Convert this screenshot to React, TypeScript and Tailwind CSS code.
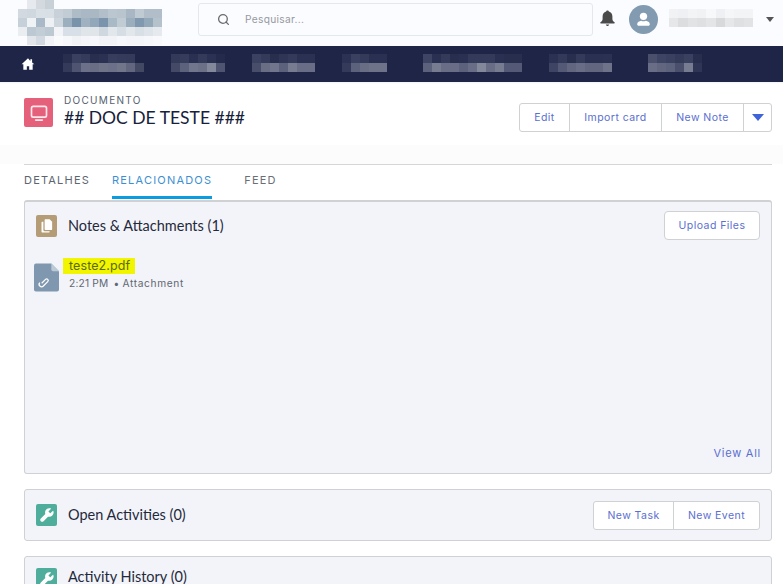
import React from 'react';
import { Search } from 'lucide-react';

const logoRows: string[][] = [
  ['#fbfcff', '#e6e9ed', '#d3d9de', '#c9d1d8', '#fbfcff', '#fbfcff', '#fbfcff', '#fbfcff', '#fbfcff', '#fbfcff', '#fbfcff', '#fbfcff', '#fbfcff', '#fbfcff', '#fbfcff', '#fbfcff'],
  ['#d2d9e0', '#d0d8df', '#d9e0e6', '#d8dfe5', '#c8d1d9', '#c2ccd4', '#aebcc8', '#a9b8c4', '#aab8c4', '#b2bfca', '#bac6d0', '#b8c4ce', '#a9b7c4', '#c0cad3', '#b1bdc8', '#b1bdc8'],
  ['#c6d0d8', '#f0f3f6', '#a9b9c7', '#eef1f4', '#cdd6dd', '#9cafbf', '#7893aa', '#a0b2c1', '#92a7b9', '#7a94ab', '#a9b9c6', '#c0cbd4', '#9aaebe', '#8099ae', '#93a8b9', '#b5c2cc'],
  ['#eaeef1', '#bcc8d2', '#c3cdd6', '#bcc8d2', '#f2f4f7', '#d8dfe6', '#d8dfe6', '#e0e5ea', '#e0e5ea', '#cfd8df', '#e2e7ec', '#d6dde4', '#e2e7ec', '#d8dfe5', '#dfe4ea', '#e6eaef'],
  ['#fbfcff', '#e2e6eb', '#d2d9e0', '#f1f3f6', '#f9fafc', '#f6f7fa', '#f0f2f5', '#f3f5f8', '#f6f7fa', '#f1f3f6', '#f1f3f6', '#f6f7fa', '#f3f5f8', '#f3f5f8', '#f6f7fa', '#f8f9fb'],
];

const navBlocks: { gap: number; top: string[]; bottom: string[] }[] = [
  { gap: 0, top: ['#272e4e', '#3a4060', '#353b5b', '#272e4e', '#2b3152', '#373d5c', '#353b5b', '#343a5a', '#1e2547'], bottom: ['#343a5a', '#4f5470', '#6c7088', '#6a6e85', '#707489', '#6c7088', '#72768b', '#62667e', '#434863'] },
  { gap: 27, top: ['#333a59', '#363c5c', '#2a3051', '#343a5a', '#2b3152', '#232a4b'], bottom: ['#444a66', '#5d627c', '#72768c', '#6d7188', '#84889b', '#4f5470'] },
  { gap: 27, top: ['#3b4160', '#343a5a', '#272e4e', '#2f3555', '#343a5a', '#2b3152', '#2b3152'], bottom: ['#484d69', '#6a6e85', '#72768c', '#5d627c', '#787c91', '#696d85', '#696d85'] },
  { gap: 27, top: ['#2b3152', '#3a4060', '#343a5a', '#2a3051', '#2a3051'], bottom: ['#343a5a', '#5d627c', '#6a6e85', '#6f738a', '#6f738a'] },
  { gap: 36, top: ['#3e4463', '#2a3051', '#343a5a', '#272e4e', '#2a3051', '#343a5a', '#343a5a', '#343a5a', '#2a3051', '#272e4e', '#272e4e'], bottom: ['#5d627c', '#787c91', '#696d85', '#696d85', '#5d627c', '#696d85', '#84889b', '#696d85', '#787c91', '#545975', '#545975'] },
  { gap: 27, top: ['#2b3152', '#333a59', '#272e4e', '#343a5a', '#2a3051', '#2a3051', '#2b3152'], bottom: ['#3e4463', '#545975', '#62667e', '#696d85', '#62667e', '#62667e', '#6f738a'] },
  { gap: 36, top: ['#4a4f6b', '#3e4463', '#3a4060', '#343a5a', '#3a4060', '#272e4e'], bottom: ['#696d85', '#62667e', '#5d627c', '#4a4f6b', '#787c91', '#2f3555'] },
];

const userRows: string[][] = [
  ['#f1f2f4', '#eef0f3', '#f3f4f6', '#f1f2f4', '#f7f8fa', '#eff0f3', '#f5f6f8', '#f3f4f6', '#f3f4f6'],
  ['#e6e7e9', '#dcdddf', '#e2e3e5', '#dfe0e2', '#e4e5e7', '#d8d9db', '#e6e7e9', '#dfe0e2', '#e2e3e5'],
];

const Mosaic = ({ rows, cell, width }: { rows: string[][]; cell: number; width?: number }) => (
  <div className="flex flex-col" style={width ? { width } : undefined}>
    {rows.map((row, i) => (
      <div key={i} className="flex">
        {row.map((color, j) => (
          <div key={j} className="grow" style={{ width: cell, height: cell, backgroundColor: color }} />
        ))}
      </div>
    ))}
  </div>
);

const ActionButton = ({ label, className = '' }: { label: string; className?: string }) => (
  <button className={`pt-[1px] text-[10.5px] tracking-[0.45px] text-[#5a6fd0] font-['Inter',sans-serif] ${className}`}>
    {label}
  </button>
);

const WrenchTile = () => (
  <div className="w-[21px] h-[22px] rounded-[2px] bg-[#4fae9b] flex items-center justify-center shrink-0">
    <svg viewBox="0 0 24 24" className="w-[16px] h-[16px]" fill="#fff">
      <path d="M21.6 6.2a.6.6 0 0 0-1-.3l-3.2 3.2a.7.7 0 0 1-1 0l-1.9-1.9a.7.7 0 0 1 0-1L17.7 3a.6.6 0 0 0-.3-1 6.6 6.6 0 0 0-7.9 8.5L2.7 17.2a2.9 2.9 0 0 0 4.1 4.1l6.7-6.8a6.6 6.6 0 0 0 8.1-8.3z" />
    </svg>
  </div>
);

export default function App() {
  return (
    <div className="h-screen w-full overflow-hidden bg-white font-['Lato',sans-serif]">
      {/* Top bar */}
      <header className="h-[46px] bg-[#fbfcff] flex items-start pl-[18px]">
        <div className="w-[144px] shrink-0">
          <Mosaic rows={logoRows} cell={9} />
        </div>
        <div className="ml-[36px] mt-[3px] w-[395px] h-[33px] border border-[#e5e7ea] rounded-[3px] flex items-center pl-[18px]">
          <Search size={13} strokeWidth={2.4} className="text-[#6b6b6b]" />
          <span className="ml-[15px] text-[10.2px] tracking-[0.3px] text-[#96999e] font-['Inter',sans-serif]">Pesquisar...</span>
        </div>
        <svg viewBox="0 0 17 17" className="ml-[6px] mt-[10px] w-[17px] h-[17px]" fill="#4a4a4a">
          <path d="M8.5 0.5c.8 0 1.3.5 1.4 1.1 2.2.6 3.5 2.5 3.5 4.9v2.6c0 1.2.6 2.1 2.1 3.2.6.5.3 1.2-.4 1.2H1.9c-.7 0-1-.7-.4-1.2C3 11.2 3.6 10.3 3.6 9.1V6.5c0-2.4 1.3-4.3 3.5-4.9.1-.6.6-1.1 1.4-1.1z" />
          <path d="M6.8 14.6h3.4c-.2.9-.9 1.5-1.7 1.5s-1.5-.6-1.7-1.5z" />
        </svg>
        <div className="ml-[13px] mt-[5px] w-[29px] h-[29px] rounded-full bg-[#829bb1] flex items-center justify-center shrink-0">
          <svg viewBox="0 0 24 24" className="w-[19px] h-[19px]" fill="#fff">
            <circle cx="12" cy="8" r="4.6" />
            <path d="M4 18c0-2.6 3-4 5-4.4 1.8 1 4.2 1 6 0 2 .4 5 1.8 5 4.4 0 1.1-.8 2-2 2H6c-1.2 0-2-.9-2-2z" />
          </svg>
        </div>
        <div className="ml-[11px] mt-[9px]">
          <Mosaic rows={userRows} cell={9} width={84} />
        </div>
        <div className="ml-[13px] mt-[17px] w-0 h-0 border-x-[4.5px] border-x-transparent border-t-[5px] border-t-[#555]" />
      </header>

      {/* Navigation */}
      <nav className="h-[36px] bg-[#1e2547] flex items-center pl-[21px]">
        <svg viewBox="0 0 24 24" className="w-[14px] h-[14px] shrink-0" fill="#fff">
          <path d="M12 2 1 12.5h3V22h6v-6h4v6h6v-9.5h3L19 9.6V4h-3v2.8z" />
        </svg>
        <div className="flex ml-[28px] mb-[2px]">
          {navBlocks.map((block, i) => (
            <div key={i} style={{ marginLeft: block.gap }}>
              <Mosaic rows={[block.top, block.bottom]} cell={9} />
            </div>
          ))}
        </div>
      </nav>

      {/* Record header */}
      <div className="h-[63px] pl-[24px] pr-[11px] flex items-start bg-white shadow-[inset_0_3px_2px_-2px_#f1f2f4]">
        <div className="mt-[16px] w-[29px] h-[29px] rounded-[2px] bg-[#e5607a] flex items-center justify-center">
          <svg viewBox="0 0 24 24" className="w-[20px] h-[20px]" fill="none" stroke="#fde8ec" strokeWidth="2">
            <rect x="3" y="4" width="18" height="13" rx="2" />
            <path d="M8 20.5h8" strokeLinecap="round" />
          </svg>
        </div>
        <div className="ml-[11px] mt-[12px]">
          <div className="text-[10px] leading-[12px] tracking-[1.3px] text-[#56606e] font-['Inter',sans-serif]">DOCUMENTO</div>
          <div className="mt-[1px] text-[17.5px] leading-[22px] text-[#16213a]">## DOC DE TESTE ###</div>
        </div>
        <div className="ml-auto mt-[21px] flex h-[29px] rounded-[3px] border border-[#cfd1d3] bg-white">
          <ActionButton label="Edit" className="w-[50px] border-r border-[#cfd1d3]" />
          <ActionButton label="Import card" className="w-[92px] border-r border-[#cfd1d3]" />
          <ActionButton label="New Note" className="w-[82px] border-r border-[#cfd1d3]" />
          <div className="w-[27px] flex items-center justify-center">
            <div className="w-0 h-0 border-x-[6px] border-x-transparent border-t-[7px] border-t-[#3f63d8]" />
          </div>
        </div>
      </div>
      <div className="h-[19px] bg-[#fcfcfc]" />

      <main className="pl-[24px] pr-[11px]">
        {/* Tabs */}
        <div className="border-t border-[#d5d6d8] h-[36px] flex items-start text-[11px] tracking-[1.2px] font-['Inter',sans-serif]">
          <div className="pt-[7px] text-[#5c6570]">DETALHES</div>
          <div className="ml-[22px] pt-[7px] text-[#3d8fd1] h-[34px] border-b-[3px] border-[#0a9be0]">RELACIONADOS</div>
          <div className="ml-[32px] pt-[7px] text-[#6a6f76]">FEED</div>
        </div>

        {/* Notes & Attachments */}
        <section className="h-[274px] bg-[#f3f4f9] border border-[#d0d1d3] border-t-2 rounded-[3px] flex flex-col">
          <div className="flex items-center px-[11px] pt-[9px]">
            <div className="w-[21px] h-[22px] rounded-[2px] bg-[#b49d76] flex items-center justify-center">
              <svg viewBox="0 0 24 24" className="w-[15px] h-[15px]" fill="#fff">
                <path d="M10 2h7l4 4v12a1 1 0 0 1-1 1H10a1 1 0 0 1-1-1V3a1 1 0 0 1 1-1z" />
                <path d="M7 6v13a2 2 0 0 0 2 2h8v1a1 1 0 0 1-1 1H5a1 1 0 0 1-1-1V7a1 1 0 0 1 1-1z" />
              </svg>
            </div>
            <h2 className="ml-[11px] text-[14.5px] text-[#1f2a3c]">Notes &amp; Attachments (1)</h2>
            <button className="ml-auto h-[29px] w-[96px] pt-[1px] bg-white border border-[#d0d1d3] rounded-[4px] text-[10.5px] tracking-[0.45px] text-[#5a6fd0] font-['Inter',sans-serif]">
              Upload Files
            </button>
          </div>
          <div className="flex pl-[9px] mt-[18px]">
            <svg viewBox="0 0 26 29" className="w-[25px] h-[29px] mt-[5px]">
              <path d="M2 0h16l8 8v19a2 2 0 0 1-2 2H2a2 2 0 0 1-2-2V2a2 2 0 0 1 2-2z" fill="#7f98b0" />
              <path d="M18 0l8 8h-6a2 2 0 0 1-2-2z" fill="#bccad6" />
              <path d="M7 21.5l4-4a1.6 1.6 0 0 1 2.3 2.3l-4.6 4.6a2.5 2.5 0 0 1-3.6-3.6" fill="none" stroke="#fff" strokeWidth="1.3" transform="translate(1 -1)" />
            </svg>
            <div className="ml-[4px]">
              <div className="w-[72px] h-[16px] bg-[#f2f500] pl-[6px] text-[12.5px] leading-[16px] tracking-[0.1px] text-[#5b6a10] font-['Inter',sans-serif]">teste2.pdf</div>
              <div className="ml-[6px] mt-[2px] flex text-[10.2px] leading-[14px] tracking-[0.2px] text-[#5f6772] font-['Inter',sans-serif]">
                <span>2:21 PM</span>
                <span className="ml-[5px]">•</span>
                <span className="ml-[3px] tracking-[0.65px]">Attachment</span>
              </div>
            </div>
          </div>
          <div className="mt-auto pb-[12px] pr-[10px] text-right text-[11px] tracking-[0.75px] text-[#5a6fd0] font-['Inter',sans-serif]">View All</div>
        </section>

        {/* Open Activities */}
        <section className="mt-[15px] h-[52px] bg-[#f3f4f9] border border-[#d0d1d3] rounded-[3px] flex items-center px-[11px]">
          <WrenchTile />
          <h2 className="ml-[11px] text-[14.5px] text-[#1f2a3c]">Open Activities (0)</h2>
          <div className="ml-auto flex h-[29px] rounded-[3px] border border-[#d0d1d3] bg-white">
            <ActionButton label="New Task" className="w-[80px] border-r border-[#d0d1d3]" />
            <ActionButton label="New Event" className="w-[85px]" />
          </div>
        </section>

        {/* Activity History */}
        <section className="mt-[15px] h-[52px] bg-[#f3f4f9] border border-[#d0d1d3] rounded-[3px] flex items-start px-[11px] pt-[11px]">
          <WrenchTile />
          <h2 className="ml-[11px] text-[14.5px] leading-[18px] text-[#1f2a3c]">Activity History (0)</h2>
        </section>
      </main>
    </div>
  );
}
